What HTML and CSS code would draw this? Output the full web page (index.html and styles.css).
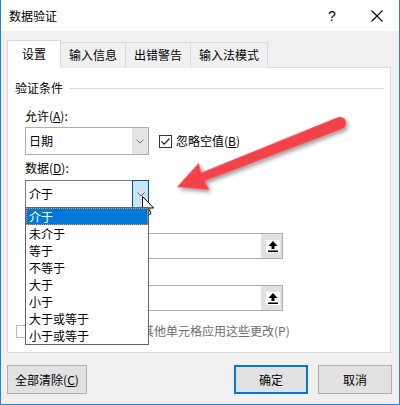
FILE: index.html
```html
<!DOCTYPE html>
<html lang="zh">
<head>
    <meta charset="UTF-8">
    <title>数据验证</title>
    <link rel="stylesheet" href="styles.css">
</head>
<body>
    <div class="window">
        <div class="titlebar">
            <span class="title">数据验证</span>
            <span class="help">?</span>
            <span class="close">
                <svg width="12" height="12" viewBox="0 0 12 12"><path d="M0.5 0.5L11.5 11.5M11.5 0.5L0.5 11.5" stroke="#000" stroke-width="1.1" fill="none"/></svg>
            </span>
        </div>
        <div class="content">
            <div class="tabs">
                <div class="tab active">设置</div>
                <div class="tab">输入信息</div>
                <div class="tab">出错警告</div>
                <div class="tab">输入法模式</div>
            </div>
            <div class="panel">
                <div class="group-title"><span>验证条件</span><i class="rule"></i></div>
                <div class="fields">
                    <div class="label first">允许(<u>A</u>):</div>
                    <div class="row">
                        <div class="select">
                            <span class="value">日期</span>
                            <span class="drop">
                                <svg width="8" height="5" viewBox="0 0 8 5"><path d="M0.5 0.5L4 4L7.5 0.5" stroke="#707070" fill="none"/></svg>
                            </span>
                        </div>
                        <label class="check">
                            <span class="box">
                                <svg width="11" height="11" viewBox="0 0 11 11"><path d="M1.5 5.5L4.2 8.2L9.5 2.5" stroke="#222" stroke-width="1.2" fill="none"/></svg>
                            </span>
                            忽略空值(<u>B</u>)
                        </label>
                    </div>
                    <div class="label">数据(<u>D</u>):</div>
                    <div class="select-wrap">
                        <div class="select open">
                            <span class="value">介于</span>
                            <span class="drop">
                                <svg width="8" height="5" viewBox="0 0 8 5"><path d="M0.5 0.5L4 4L7.5 0.5" stroke="#606060" fill="none"/></svg>
                            </span>
                        </div>
                        <ul class="list">
                            <li class="selected"><span>介于</span></li>
                            <li>未介于</li>
                            <li>等于</li>
                            <li>不等于</li>
                            <li>大于</li>
                            <li>小于</li>
                            <li>大于或等于</li>
                            <li>小于或等于</li>
                        </ul>
                    </div>
                    <!-- labels of the two ranges sit under the open list -->
                    <div class="label small"></div>
                    <div class="ref">
                        <span class="ref-btn">
                            <span class="ref-icon">
                                <svg width="10" height="11" viewBox="0 0 10 11"><path d="M5 0L9.5 5H6.5V8H3.5V5H0.5Z" fill="#000"/><rect x="0" y="9.5" width="10" height="1.5" fill="#000"/></svg>
                            </span>
                        </span>
                    </div>
                    <div class="label next"></div>
                    <div class="ref">
                        <span class="ref-btn">
                            <span class="ref-icon">
                                <svg width="10" height="11" viewBox="0 0 10 11"><path d="M5 0L9.5 5H6.5V8H3.5V5H0.5Z" fill="#000"/><rect x="0" y="9.5" width="10" height="1.5" fill="#000"/></svg>
                            </span>
                        </span>
                    </div>
                </div>
                <label class="check disabled">
                    <span class="box"></span>
                    对有同样设置的所有其他单元格应用这些更改(P)
                </label>
            </div>
            <div class="buttons">
                <button class="btn wide">全部清除(<u>C</u>)</button>
                <span class="spacer"></span>
                <button class="btn default">确定</button>
                <button class="btn">取消</button>
            </div>
        </div>

        <!-- annotation arrow drawn over the dialog -->
        <svg class="arrow" width="400" height="405" viewBox="0 0 400 405">
            <defs>
                <filter id="shadow" x="-20%" y="-20%" width="140%" height="160%">
                    <feDropShadow dx="1" dy="3" stdDeviation="2" flood-color="#000" flood-opacity="0.4"/>
                </filter>
            </defs>
            <g transform="translate(177 187) rotate(-21.4)" filter="url(#shadow)">
                <path d="M0 0L29 -14.5L28 -4.5L175 -6.2A6.2 6.2 0 0 1 175 6.2L28 4.5L29 14.5Z" fill="#f4434b"/>
            </g>
        </svg>

        <svg class="cursor" width="13" height="20" viewBox="0 0 13 20">
            <path d="M0.5 0.5V16.5L4.3 12.9L6.8 18.6L9 17.6L6.6 12H11.7Z" fill="#fff" stroke="#000" stroke-width="1" stroke-linejoin="round"/>
        </svg>
    </div>
</body>
</html>
```
FILE: styles.css
```css
*{
    margin: 0;
    padding: 0;
    box-sizing: border-box;
}
body{
    font-family: "Noto Sans CJK SC", "Liberation Sans", sans-serif;
    font-size: 12px;
    color: #000;
    background: #fff;
}
.window{
    position: relative;
    width: 400px;
    height: 405px;
    border: 1px solid #2b7fd3;
    border-top: none;
    background: #f0f0f0;
    overflow: hidden;
}
.titlebar{
    height: 31px;
    background: #fff;
    display: flex;
    align-items: center;
    padding-left: 8px;
}
.title{
    flex: 1;
    line-height: 16px;
}
.help{
    font-family: "Liberation Sans", sans-serif;
    font-size: 14px;
    width: 12px;
    margin-right: 31px;
}
.close{
    display: flex;
    margin-right: 16px;
    margin-top: 1px;
}

.content{
    padding-top: 9px;
}
.tabs{
    display: flex;
    align-items: flex-end;
    padding-left: 6px;
    margin-bottom: -1px;
    position: relative;
    z-index: 1;
}
.tab{
    height: 26px;
    line-height: 24px;
    padding: 0 8px;
    border-top: 1px solid #d9d9d9;
    border-right: 1px solid #d9d9d9;
    background: #f0f0f0;
}
.tab.active{
    height: 28px;
    line-height: 26px;
    padding: 0 14px;
    border-left: 1px solid #d9d9d9;
    background: #fff;
}

.panel{
    margin-left: 6px;
    width: 384px;
    height: 286px;
    background: #fff;
    border: 1px solid #d9d9d9;
    padding: 12px 6px 0 7px;
}
.group-title{
    display: flex;
    align-items: center;
    height: 16px;
    line-height: 16px;
}
.rule{
    flex: 1;
    height: 1px;
    margin-left: 6px;
    background: #dcdcdc;
}
.fields{
    padding-left: 10px;
}
.label{
    line-height: 16px;
    height: 16px;
    margin-top: 5px;
    margin-bottom: 3px;
}
.label.first{
    margin-top: 12px;
}
.label.small{
    margin-top: 6px;
}
.label.next{
    margin-top: 6px;
    margin-bottom: 4px;
}
u{
    text-decoration: underline;
    text-underline-offset: 1px;
}

.row{
    display: flex;
    align-items: center;
}
.select{
    width: 124px;
    height: 28px;
    border: 1px solid #adadad;
    display: flex;
    align-items: stretch;
    background: #fff;
}
.select .value{
    flex: 1;
    padding-left: 3px;
    line-height: 26px;
}
.select .drop{
    width: 16px;
    background: #e5e5e5;
    display: flex;
    align-items: center;
    justify-content: center;
}
.select-wrap{
    position: relative;
    margin-top: 4px;
}
.select.open{
    border-color: #7a7a7a;
}
.select.open .drop{
    width: 17px;
    margin: -1px -1px -1px 0;
    background: #cce4f7;
    border: 1px solid #005499;
    padding-top: 1px;
}
.list{
    position: absolute;
    left: 0;
    top: 27px;
    width: 124px;
    list-style: none;
    background: #fff;
    border: 1px solid #646464;
    z-index: 2;
}
.list li{
    height: 17px;
    line-height: 17px;
    padding-left: 3px;
}
.list li.selected{
    background: #0078d7;
    color: #fff;
    outline: 1px dotted #e89a3c;
    outline-offset: -1px;
}

.check{
    display: flex;
    align-items: center;
    line-height: 16px;
    margin-left: 10px;
}
.check .box{
    width: 13px;
    height: 13px;
    border: 1px solid #333;
    margin-right: 4px;
    display: flex;
    align-items: center;
    justify-content: center;
    background: #fff;
}
.check.disabled{
    margin: 12px 0 0 1px;
    color: #6d6d6d;
}
.check.disabled .box{
    border-color: #bcbcbc;
    margin-right: 5px;
}

.ref{
    width: 258px;
    height: 26px;
    border: 1px solid #adadad;
    display: flex;
    justify-content: flex-end;
    background: #fff;
}
.ref-btn{
    width: 21px;
    background: #e1e1e1;
    display: flex;
    align-items: center;
    justify-content: center;
    padding-left: 2px;
}
.ref-icon{
    width: 14px;
    height: 13px;
    background: #fff;
    display: flex;
    align-items: center;
    justify-content: center;
}

.buttons{
    display: flex;
    gap: 10px;
    padding: 0 7px 0 6px;
    margin-top: 12px;
}
.spacer{
    flex: 1;
}
.btn{
    font-family: inherit;
    font-size: 12px;
    color: #000;
    height: 29px;
    width: 74px;
    background: #e1e1e1;
    border: 1px solid #adadad;
}
.btn.wide{
    width: 80px;
}
.btn.default{
    border: 2px solid #0078d7;
}

.arrow{
    position: absolute;
    left: -1px;
    top: 0;
    pointer-events: none;
}
.cursor{
    position: absolute;
    left: 141px;
    top: 196px;
}
```
